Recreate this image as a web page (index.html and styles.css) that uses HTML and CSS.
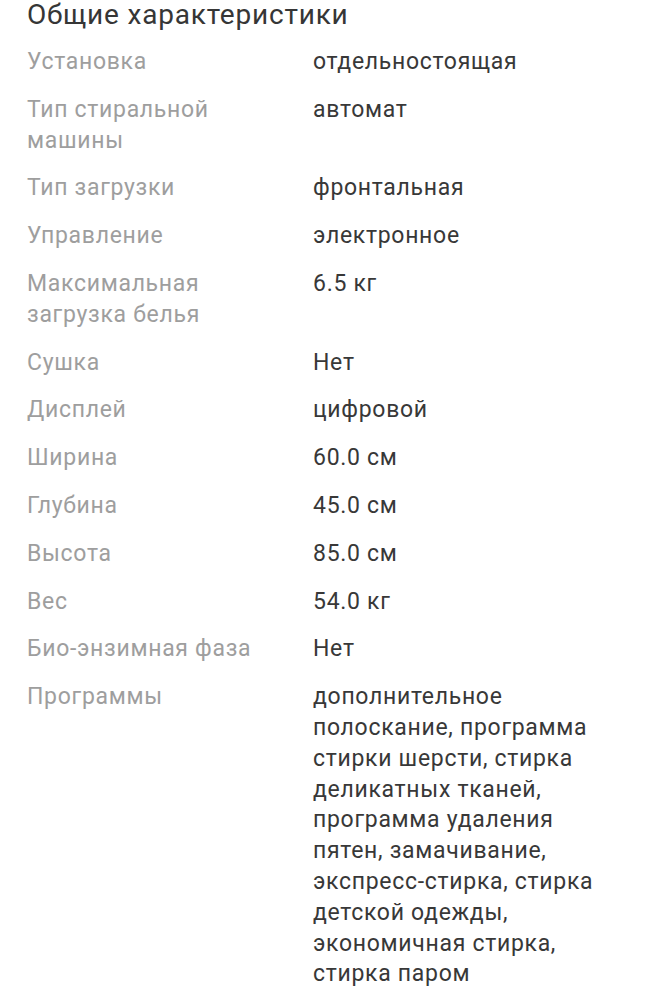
FILE: index.html
```html
<!DOCTYPE html>
<html lang="ru">
<head>
<meta charset="utf-8">
<link rel="stylesheet" href="styles.css">
</head>
<body>
<div class="page">
  <h2 class="title">Общие характеристики</h2>
  <dl class="specs">
    <dt>Установка</dt><dd>отдельностоящая</dd>
    <dt>Тип стиральной машины</dt><dd>автомат</dd>
    <dt>Тип загрузки</dt><dd>фронтальная</dd>
    <dt>Управление</dt><dd>электронное</dd>
    <dt>Максимальная загрузка белья</dt><dd>6.5 кг</dd>
    <dt>Сушка</dt><dd>Нет</dd>
    <dt>Дисплей</dt><dd>цифровой</dd>
    <dt>Ширина</dt><dd>60.0 см</dd>
    <dt>Глубина</dt><dd>45.0 см</dd>
    <dt>Высота</dt><dd>85.0 см</dd>
    <dt>Вес</dt><dd>54.0 кг</dd>
    <dt>Био-энзимная фаза</dt><dd>Нет</dd>
    <dt>Программы</dt><dd>дополнительное полоскание, программа стирки шерсти, стирка деликатных тканей, программа удаления пятен, замачивание, экспресс-стирка, стирка детской одежды, экономичная стирка, стирка паром</dd>
  </dl>
</div>
</body>
</html>
```
FILE: styles.css
```css
html, body {
  margin: 0;
  padding: 0;
  background: #ffffff;
}
.page {
  font-family: Roboto, "Noto Sans", sans-serif;
  padding: 1px 27px 0 27px;
}
.title {
  margin: 0;
  font-size: 28px;
  font-weight: 400;
  line-height: 28px;
  letter-spacing: 0.8px;
  color: #363636;
}
.specs {
  margin: 18px 0 0 0;
  display: grid;
  grid-template-columns: 256px 300px;
  column-gap: 30px;
  row-gap: 17px;
  font-size: 23px;
  line-height: 30.8px;
  letter-spacing: 0.7px;
}
.specs dt {
  color: #9e9e9e;
  margin: 0;
}
.specs dd {
  color: #383838;
  margin: 0;
}
```
